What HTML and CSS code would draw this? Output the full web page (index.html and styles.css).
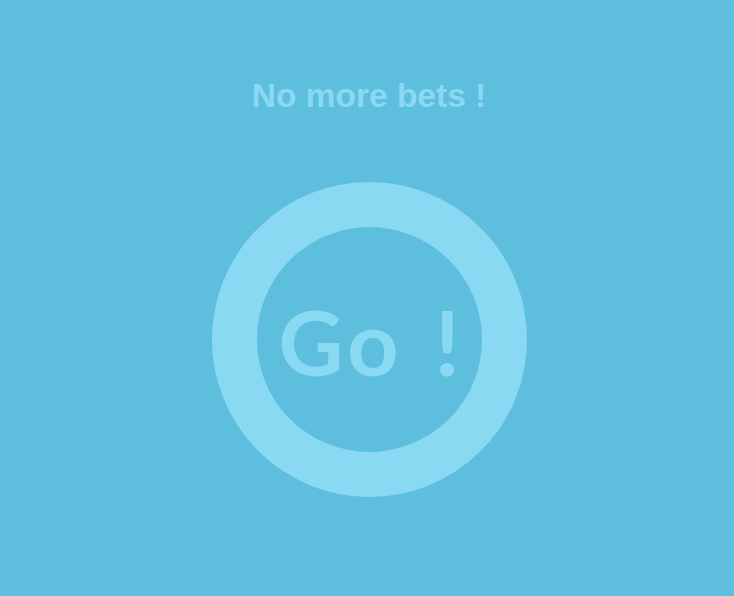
FILE: index.html
```html
<!DOCTYPE html>
<html lang="en">
<head>
<meta charset="utf-8">
<title>No more bets</title>
<link rel="stylesheet" href="styles.css">
</head>
<body>
<main class="stage">
  <h1 class="status">No more bets !</h1>
  <div class="ring">
    <span class="go">Go !</span>
  </div>
</main>
</body>
</html>
```
FILE: styles.css
```css
html, body {
  margin: 0;
  padding: 0;
  height: 100%;
  background: #5dbede;
}
.stage {
  display: flex;
  flex-direction: column;
  align-items: center;
  padding-top: 76px;
  padding-left: 4px;
}
.status {
  margin: 0;
  font-family: "Liberation Sans", Arial, sans-serif;
  font-weight: bold;
  font-size: 33.5px;
  line-height: 40px;
  color: #8ad9f3;
}
.ring {
  margin-top: 66px;
  width: 225px;
  height: 225px;
  border: 45px solid #8ad9f3;
  border-radius: 50%;
  display: flex;
  align-items: center;
  justify-content: center;
}
.go {
  font-family: Lato, "Noto Sans", sans-serif;
  font-weight: bold;
  font-size: 90px;
  line-height: 1;
  color: #8ad9f3;
  letter-spacing: 4px;
  word-spacing: 6px;
  margin-top: 2px;
  margin-right: -4px;
}
```
